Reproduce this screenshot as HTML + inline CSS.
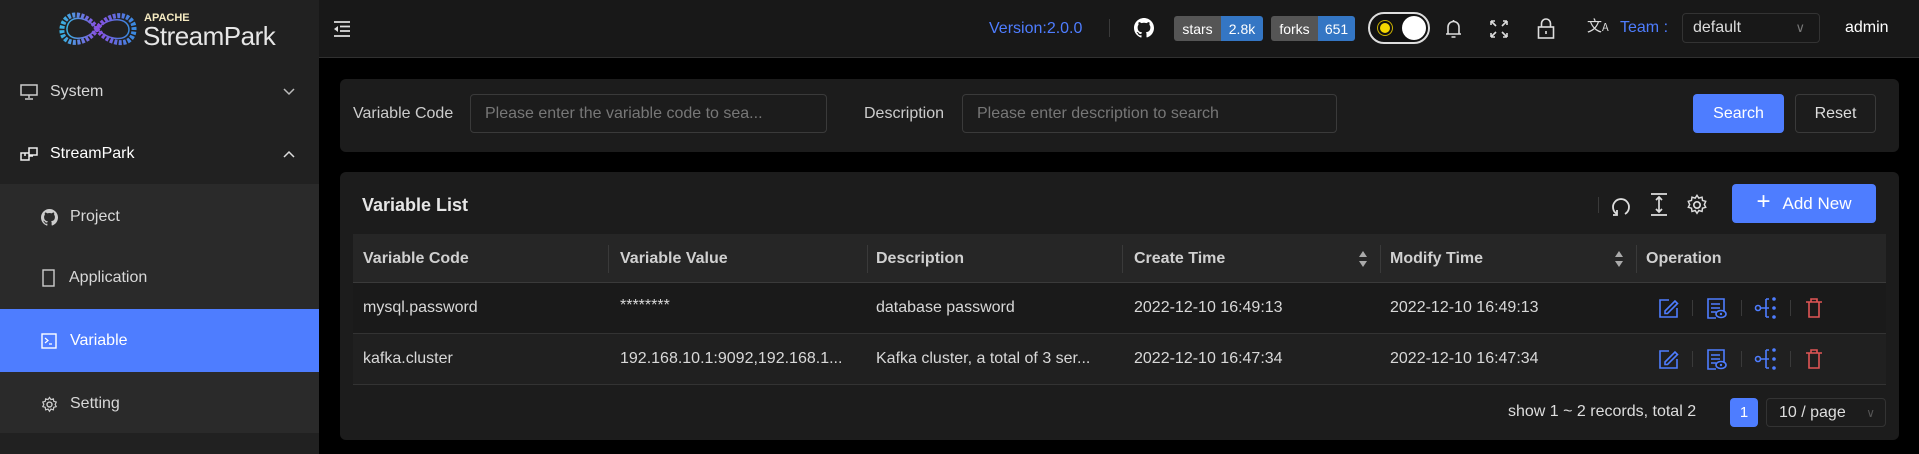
<!DOCTYPE html>
<html><head><meta charset="utf-8"><style>
*{box-sizing:border-box;margin:0;padding:0}
body{width:1919px;height:454px;background:#000;font-family:"Liberation Sans",sans-serif;color:#dcdcdc;position:relative;overflow:hidden;font-size:16px}
.a{position:absolute}
.side{left:0;top:0;width:319px;height:454px;background:#212121}
.mi{position:absolute;left:0;width:319px;height:60px;display:flex;align-items:center;font-size:16px;color:#d8d8d8}
.hdr{left:319px;top:0;width:1600px;height:58px;background:#181818;border-bottom:1px solid #303030}
.card{background:#1c1c1c;border-radius:6px}
.inp{border:1px solid #3a3a3a;border-radius:4px;height:39px;display:flex;align-items:center;padding-left:14px;color:#777;font-size:16px;background:#1c1c1c}
.btn{border-radius:4px;height:39px;display:flex;align-items:center;justify-content:center;font-size:16px}
.th{font-weight:bold;color:#d0d0d0;font-size:16px}
.td{font-size:16px;color:#d8d8d8}
.sep{width:1px;background:#3a3a3a}
svg{display:block}
</style></head><body>
<div class="a side"></div>
<svg class="a" style="left:57px;top:4px" width="82" height="50" viewBox="0 0 82 50">
<defs><linearGradient id="g" x1="0" x2="1"><stop offset="0" stop-color="#3ab0e0"/><stop offset=".5" stop-color="#8a4fe0"/><stop offset="1" stop-color="#3a8ae0"/></linearGradient></defs>
<path d="M40 25 C30 8 8 5 5 24 C3 42 28 44 40 25 C52 6 78 8 77 26 C76 44 52 42 40 25Z" fill="none" stroke="url(#g)" stroke-width="5" stroke-dasharray="3 1.5"/>
<path d="M40 25 C30 12 12 10 10 24 C9 37 28 38 40 25 C52 12 72 13 72 26 C71 38 52 37 40 25Z" fill="none" stroke="url(#g)" stroke-width="1.5"/>
</svg>
<div class="a" style="left:144px;top:12px;font-size:11px;font-weight:bold;color:#f4e9c0">APACHE</div>
<div class="a" style="left:143px;top:21px;font-size:26px;color:#e6e6e6;letter-spacing:-0.5px">StreamPark</div>
<div class="mi" style="top:62px"><svg style="margin-left:20px" width="18" height="16" viewBox="0 0 18 16"><rect x="1" y="1" width="16" height="10" fill="none" stroke="#ccc" stroke-width="1.5"/><path d="M9 11v3M5 15h8" stroke="#ccc" stroke-width="1.5"/></svg><span style="margin-left:12px">System</span>
<svg style="position:absolute;left:283px" width="12" height="8"><path d="M1 1l5 5 5-5" fill="none" stroke="#bbb" stroke-width="1.5"/></svg></div>
<div class="mi" style="top:124px"><svg style="margin-left:20px" width="18" height="14" viewBox="0 0 18 14"><path d="M1 6h8v7H1zM5 6V9M9 1h8v7H9zM9 9h4" fill="none" stroke="#eee" stroke-width="1.5"/></svg><span style="margin-left:12px;color:#fff">StreamPark</span>
<svg style="position:absolute;left:283px" width="12" height="8"><path d="M1 7l5-5 5 5" fill="none" stroke="#ddd" stroke-width="1.5"/></svg></div>
<div class="a" style="left:0;top:184px;width:319px;height:249px;background:#2a2a2a"></div>
<div class="mi" style="top:187px"><svg style="margin-left:41px" width="17" height="17" viewBox="0 0 16 16"><path fill="#ccc" d="M8 0C3.6 0 0 3.6 0 8c0 3.5 2.3 6.5 5.5 7.6.4.1.5-.2.5-.4v-1.4c-2.2.5-2.7-1-2.7-1-.4-.9-.9-1.2-.9-1.2-.7-.5.1-.5.1-.5.8.1 1.2.8 1.2.8.7 1.2 1.900.9 2.300.7.1-.5.3-.9.5-1.100-1.800-.2-3.600-.9-3.600-4 0-.9.3-1.600.8-2.100-.1-.2-.4-1 .1-2.100 0 0 .7-.2 2.200.8.6-.2 1.300-.3 2-.3s1.400.1 2 .3c1.500-1 2.200-.8 2.200-.8.4 1.100.2 1.900.1 2.100.5.6.8 1.300.8 2.100 0 3.100-1.900 3.700-3.600 3.900.3.3.5.8.5 1.500v2.200c0 .2.1.5.6.4C13.700 14.500 16 11.500 16 8c0-4.400-3.600-8-8-8z"/></svg><span style="margin-left:12px">Project</span></div>
<div class="mi" style="top:248px"><svg style="margin-left:42px" width="14" height="18"><rect x="1" y="1" width="11" height="16" fill="none" stroke="#ccc" stroke-width="1.4"/></svg><span style="margin-left:13px">Application</span></div>
<div class="mi" style="top:309px;height:63px;background:#4e7dff;color:#fff"><svg style="margin-left:41px" width="16" height="16"><rect x="1" y="1" width="14" height="14" fill="none" stroke="#fff" stroke-width="1.4"/><path d="M4 5l3 2.5L4 10M8 11h3" fill="none" stroke="#fff" stroke-width="1.2"/></svg><span style="margin-left:13px">Variable</span></div>
<div class="mi" style="top:374px"><svg style="margin-left:41px" width="17" height="17" viewBox="0 0 24 24"><circle cx="12" cy="12" r="3.5" fill="none" stroke="#ccc" stroke-width="2"/><path d="M12 2l2 3 3.5-1 .5 3.5 3.5 1-1.5 3.5 1.5 3-3.5 1-.5 3.5-3.5-1-2 3-2-3-3.5 1-.5-3.5-3.5-1 1.5-3-1.5-3.5 3.5-1 .5-3.5 3.5 1z" fill="none" stroke="#ccc" stroke-width="1.7"/></svg><span style="margin-left:12px">Setting</span></div>
<div class="a hdr"></div>
<svg class="a" style="left:333px;top:21px" width="18" height="16"><path d="M1 1h16M7 5.5h10M7 10h10M1 15h16" stroke="#ddd" stroke-width="1.8"/><path d="M5 5l-4 3 4 3z" fill="#ddd"/></svg>
<div class="a" style="left:989px;top:20px;color:#4e7dff;font-size:16px">Version:2.0.0</div>
<div class="a sep" style="left:1109px;top:19px;height:18px"></div>
<svg class="a" style="left:1134px;top:18px" width="20" height="20" viewBox="0 0 16 16"><path fill="#fff" d="M8 0C3.6 0 0 3.6 0 8c0 3.5 2.3 6.5 5.5 7.6.4.1.5-.2.5-.4v-1.4c-2.2.5-2.7-1-2.7-1-.4-.9-.9-1.2-.9-1.2-.7-.5.1-.5.1-.5.8.1 1.2.8 1.2.8.7 1.2 1.9.9 2.3.7.1-.5.3-.9.5-1.1-1.8-.2-3.6-.9-3.6-4 0-.9.3-1.6.8-2.1-.1-.2-.4-1 .1-2.1 0 0 .7-.2 2.2.8.6-.2 1.3-.3 2-.3s1.4.1 2 .3c1.5-1 2.2-.8 2.2-.8.4 1.1.2 1.9.1 2.1.5.6.8 1.3.8 2.1 0 3.1-1.9 3.7-3.6 3.9.3.3.5.8.5 1.5v2.2c0 .2.1.5.6.4C13.7 14.5 16 11.5 16 8c0-4.4-3.6-8-8-8z"/></svg>
<div class="a" style="left:1174px;top:16px;height:25px;width:89px;display:flex;font-size:14px;color:#fff;border-radius:3px;overflow:hidden"><div style="width:47px;background:#555;display:flex;align-items:center;justify-content:center">stars</div><div style="flex:1;background:#3476c4;display:flex;align-items:center;justify-content:center">2.8k</div></div>
<div class="a" style="left:1271px;top:16px;height:25px;width:84px;display:flex;font-size:14px;color:#fff;border-radius:3px;overflow:hidden"><div style="width:47px;background:#555;display:flex;align-items:center;justify-content:center">forks</div><div style="flex:1;background:#3476c4;display:flex;align-items:center;justify-content:center">651</div></div>
<div class="a" style="left:1368px;top:12px;width:62px;height:32px;border:2px solid #ddd;border-radius:16px;background:#111"></div>
<div class="a" style="left:1380px;top:23px;width:10px;height:10px;border-radius:50%;background:#f5d800;box-shadow:0 0 0 2px #111,0 0 0 3px #c9b000"></div>
<div class="a" style="left:1402px;top:16px;width:24px;height:24px;border-radius:50%;background:#fff"></div>
<svg class="a" style="left:1444px;top:19px" width="19" height="21"><path d="M4 15V8a5.5 5.5 0 0 1 11 0v7zM2 15h15M9.5 1v2M7.5 18h4" fill="none" stroke="#ddd" stroke-width="1.6"/></svg>
<svg class="a" style="left:1490px;top:20px" width="18" height="18"><path d="M1 1l5 5M17 1l-5 5M1 17l5-5M17 17l-5-5M1 1h4M1 1v4M17 1h-4M17 1v4M1 17h4M1 17v-4M17 17h-4M17 17v-4" fill="none" stroke="#ddd" stroke-width="1.6"/></svg>
<svg class="a" style="left:1537px;top:18px" width="18" height="22"><rect x="1.5" y="9" width="15" height="11" fill="none" stroke="#ddd" stroke-width="1.6"/><path d="M4.5 9V5.5a4.5 4.5 0 0 1 9 0V9M9 13v3" fill="none" stroke="#ddd" stroke-width="1.6"/></svg>
<div class="a" style="left:1587px;top:16px;font-size:15px;color:#ddd;font-family:'Noto Sans CJK SC',sans-serif;line-height:20px">文<span style="font-size:11px">A</span></div>
<div class="a" style="left:1620px;top:19px;color:#4e7dff;font-size:16px">Team :</div>
<div class="a inp" style="left:1682px;top:13px;width:138px;height:30px;color:#ddd;border-color:#333;background:#181818;padding-left:10px">default<span style="position:absolute;right:14px;color:#777;font-size:13px">∨</span></div>
<div class="a" style="left:1845px;top:19px;color:#fff;font-size:16px">admin</div>
<div class="a card" style="left:340px;top:79px;width:1559px;height:73px"></div>
<div class="a" style="left:353px;top:105px;color:#ccc">Variable Code</div>
<div class="a inp" style="left:470px;top:94px;width:357px">Please enter the variable code to sea...</div>
<div class="a" style="left:864px;top:105px;color:#ccc">Description</div>
<div class="a inp" style="left:962px;top:94px;width:375px">Please enter description to search</div>
<div class="a btn" style="left:1693px;top:94px;width:91px;background:#4e7dff;color:#fff">Search</div>
<div class="a btn" style="left:1795px;top:94px;width:81px;border:1px solid #3a3a3a;color:#ddd">Reset</div>
<div class="a card" style="left:340px;top:172px;width:1559px;height:268px"></div>
<div class="a" style="left:362px;top:195px;font-size:18px;font-weight:bold;color:#e6e6e6">Variable List</div>
<div class="a sep" style="left:1598px;top:197px;height:16px"></div>
<svg class="a" style="left:1611px;top:195px" width="20" height="22"><path d="M6 19A8 8 0 1 1 14 19" fill="none" stroke="#ddd" stroke-width="1.8"/><path d="M6 15v5H2" fill="none" stroke="#ddd" stroke-width="1.8"/></svg>
<svg class="a" style="left:1650px;top:193px" width="18" height="24"><path d="M1 1h16M1 22h16M9 4v15M6 7l3-3 3 3M6 16l3 3 3-3" fill="none" stroke="#ddd" stroke-width="1.7"/></svg>
<svg class="a" style="left:1686px;top:193px" width="22" height="24" viewBox="0 0 24 24"><circle cx="12" cy="12" r="3.5" fill="none" stroke="#ddd" stroke-width="1.8"/><path d="M12 1.5l2 3 3.5-1 .5 3.5 3.5 1-1.5 3.5 1.5 3-3.5 1-.5 3.5-3.5-1-2 3-2-3-3.5 1-.5-3.5-3.5-1 1.5-3-1.5-3.5 3.5-1 .5-3.5 3.5 1z" fill="none" stroke="#ddd" stroke-width="1.6"/></svg>
<div class="a btn" style="left:1732px;top:184px;width:144px;background:#4e7dff;color:#fff;font-size:17px"><span style="font-size:24px;font-weight:300;margin-right:12px;margin-top:-3px">+</span>Add New</div>
<div class="a" style="left:353px;top:234px;width:1533px;height:49px;background:#262626;border-bottom:1px solid #3a3a3a"></div>
<div class="a sep" style="left:608px;top:245px;height:28px"></div>
<div class="a sep" style="left:867px;top:245px;height:28px"></div>
<div class="a sep" style="left:1122px;top:245px;height:28px"></div>
<div class="a sep" style="left:1380px;top:245px;height:28px"></div>
<div class="a sep" style="left:1636px;top:245px;height:28px"></div>
<div class="a th" style="left:363px;top:250px">Variable Code</div>
<div class="a th" style="left:620px;top:250px">Variable Value</div>
<div class="a th" style="left:876px;top:250px">Description</div>
<div class="a th" style="left:1134px;top:250px">Create Time</div>
<div class="a th" style="left:1390px;top:250px">Modify Time</div>
<div class="a th" style="left:1646px;top:250px">Operation</div>
<svg class="a" style="left:1358px;top:251px" width="10" height="16"><path d="M5 0l4 6H1zM5 16l4-6H1z" fill="#aaa"/></svg>
<svg class="a" style="left:1614px;top:251px" width="10" height="16"><path d="M5 0l4 6H1zM5 16l4-6H1z" fill="#aaa"/></svg>
<div class="a" style="left:353px;top:283px;width:1533px;height:51px;background:#1a1a1a;border-bottom:1px solid #333"></div>
<div class="a" style="left:353px;top:334px;width:1533px;height:51px;background:#202020;border-bottom:1px solid #333"></div>
<div class="a td" style="left:363px;top:299px">mysql.password</div>
<div class="a td" style="left:620px;top:297px">********</div>
<div class="a td" style="left:876px;top:299px">database password</div>
<div class="a td" style="left:1134px;top:299px">2022-12-10 16:49:13</div>
<div class="a td" style="left:1390px;top:299px">2022-12-10 16:49:13</div>
<div class="a td" style="left:363px;top:350px">kafka.cluster</div>
<div class="a td" style="left:620px;top:350px">192.168.10.1:9092,192.168.1...</div>
<div class="a td" style="left:876px;top:350px">Kafka cluster, a total of 3 ser...</div>
<div class="a td" style="left:1134px;top:350px">2022-12-10 16:47:34</div>
<div class="a td" style="left:1390px;top:350px">2022-12-10 16:47:34</div>
<svg width="0" height="0" style="position:absolute"><defs>
<g id="ops">
<path d="M79 20H70v17h17V28M75 31l10-10 2.5 2.5-10 10H75z" fill="none" stroke="#4e7dff" stroke-width="1.6"/>
<rect x="102" y="20" width="1" height="16" fill="#3a3a3a"/>
<path d="M126 38h-8V19h16v12M121 24h9M121 28h9M121 32h5" fill="none" stroke="#4e7dff" stroke-width="1.6"/>
<ellipse cx="131" cy="34" rx="5" ry="3.5" fill="#1a1a1a" stroke="#4e7dff" stroke-width="1.6"/><circle cx="131" cy="34" r="1.2" fill="#4e7dff"/>
<rect x="151" y="20" width="1" height="16" fill="#3a3a3a"/>
<circle cx="168" cy="28" r="2.5" fill="none" stroke="#4e7dff" stroke-width="1.6"/>
<path d="M170 28h6M176 19v18M176 19h3M176 28h3M176 37h3" fill="none" stroke="#4e7dff" stroke-width="1.6"/>
<circle cx="184" cy="19" r="1.8" fill="#4e7dff"/><circle cx="184" cy="28" r="1.8" fill="#4e7dff"/><circle cx="184" cy="37" r="1.8" fill="#4e7dff"/>
<rect x="200" y="20" width="1" height="16" fill="#3a3a3a"/>
<path d="M216 22h16M219 22v15h10V22M221 22v-3h6v3" fill="none" stroke="#e05555" stroke-width="1.6"/>
</g></defs></svg>
<svg class="a" style="left:1590px;top:280px" width="300" height="60"><use href="#ops"/></svg>
<svg class="a" style="left:1590px;top:331px" width="300" height="60"><use href="#ops"/></svg>
<div class="a" style="left:1508px;top:403px;color:#ddd;font-size:16px">show 1 ~ 2 records, total 2</div>
<div class="a btn" style="left:1730px;top:398px;width:28px;height:29px;background:#4e7dff;color:#fff;font-size:15px">1</div>
<div class="a inp" style="left:1766px;top:398px;width:120px;height:29px;color:#ddd;padding-left:12px;border-color:#333">10 / page<span style="position:absolute;right:10px;color:#555;font-size:12px">∨</span></div>
</body></html>
